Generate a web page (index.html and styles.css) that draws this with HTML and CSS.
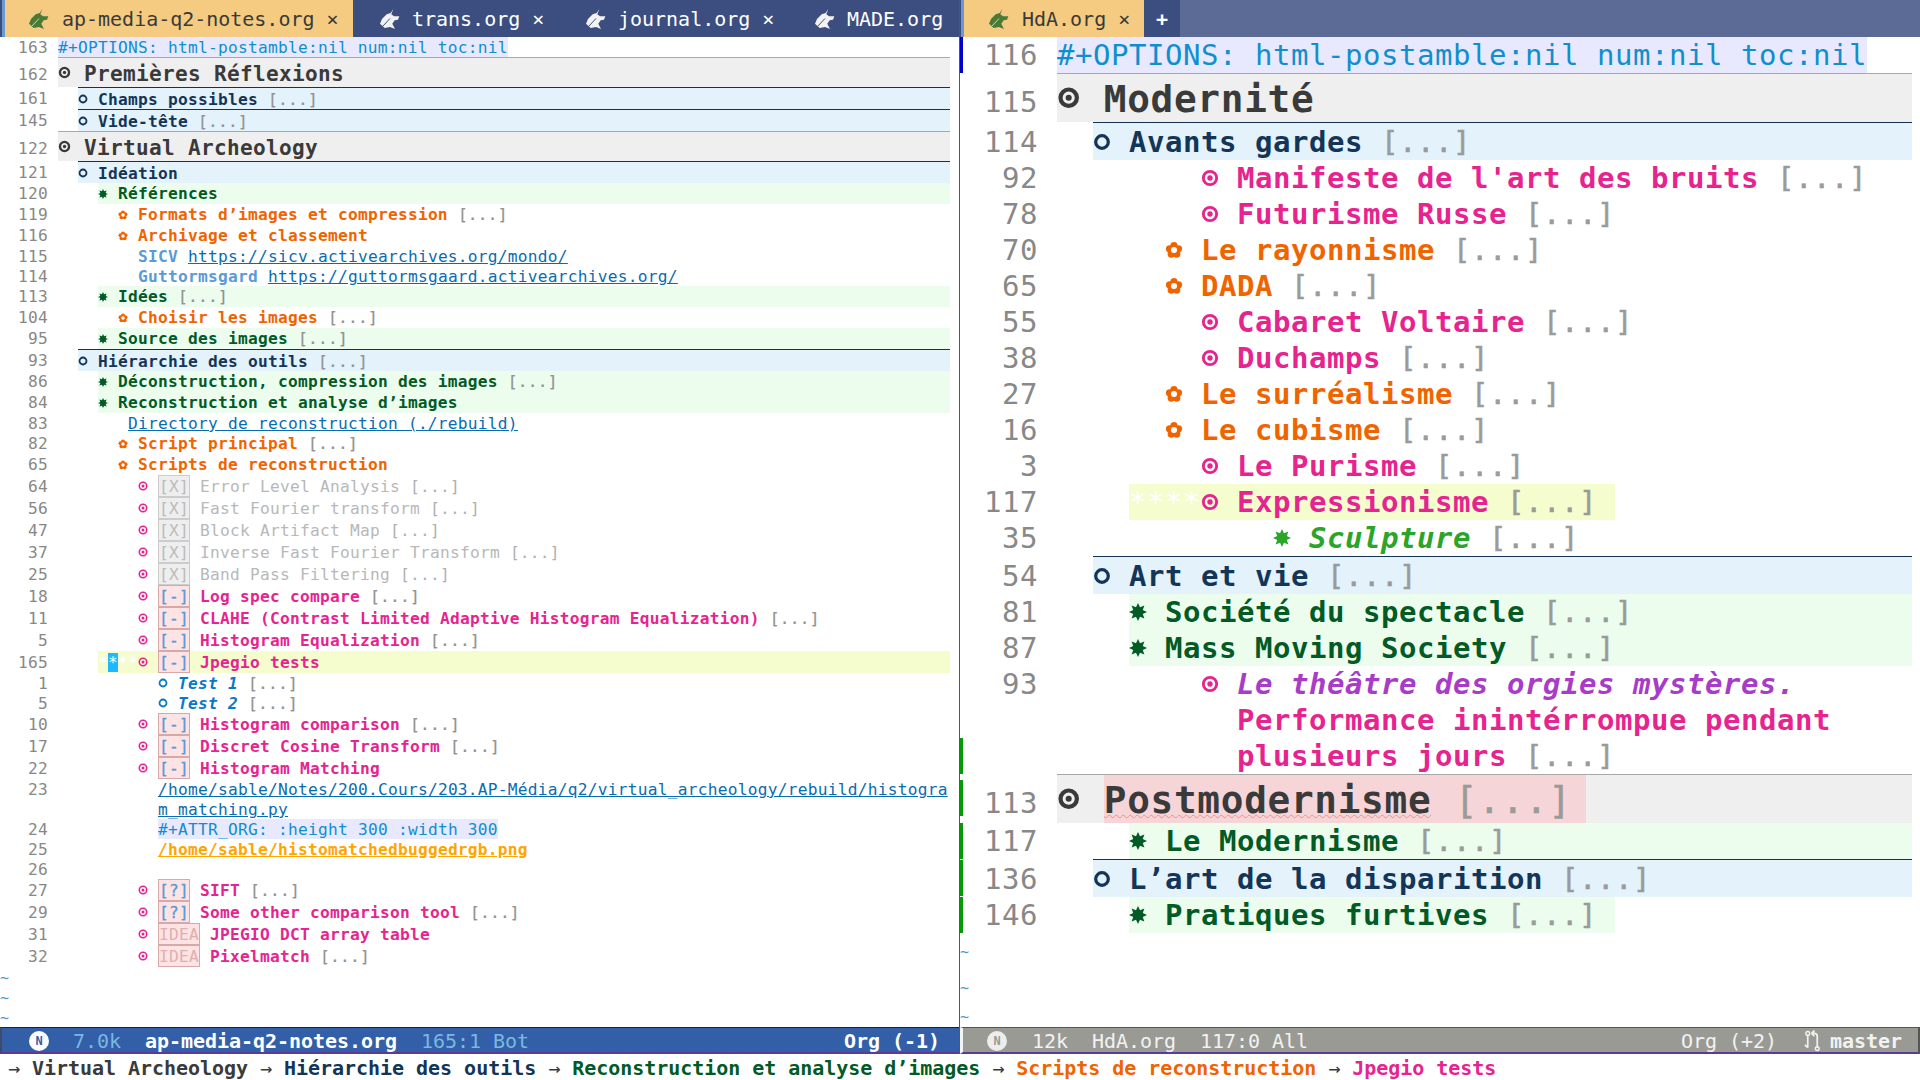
FILE: index.html
```html
<!DOCTYPE html>
<html lang="fr">
<head>
<meta charset="utf-8">
<title>Emacs</title>
<link rel="stylesheet" href="styles.css">
</head>
<body>
<svg class="defs" width="0" height="0">
  <symbol id="uni" viewBox="0 0 20 20"><path class="uni-body" d="M13.3 0L11.3 5.3L14 7.3H19.3L18 10.7L14.7 11.3L12.3 14.7L15 20L10 18L4.7 19L0 14.7L2 10L6.7 5.3L10.7 4Z"/><path class="uni-slash" d="M2.5 17.5L10 9.5"/></symbol>
  <symbol id="r1" viewBox="0 0 20 20"><circle cx="10" cy="10" r="7" fill="none" stroke="currentColor" stroke-width="3.6"/><circle cx="10" cy="10" r="2.6" fill="currentColor"/></symbol>
  <symbol id="r2" viewBox="0 0 20 20"><circle cx="10" cy="10" r="7" fill="none" stroke="currentColor" stroke-width="3.6"/></symbol>
  <symbol id="r5" viewBox="0 0 20 20"><circle cx="10" cy="10" r="7.4" fill="none" stroke="currentColor" stroke-width="3.2"/><circle cx="10" cy="10" r="3" fill="currentColor"/></symbol>
  <symbol id="s" viewBox="0 0 20 20"><path fill="currentColor" d="M10 0L12.2 4.7L17.1 2.9L15.3 7.8L20 10L15.3 12.2L17.1 17.1L12.2 15.3L10 20L7.8 15.3L2.9 17.1L4.7 12.2L0 10L4.7 7.8L2.9 2.9L7.8 4.7Z"/></symbol>
  <symbol id="f" viewBox="0 0 20 20"><g fill="currentColor"><circle cx="10" cy="5" r="4"/><circle cx="15" cy="8.6" r="4"/><circle cx="13.1" cy="14.5" r="4"/><circle cx="6.9" cy="14.5" r="4"/><circle cx="5" cy="8.6" r="4"/></g><circle cx="10" cy="10" r="3.4" fill="#fff"/></symbol>
</svg>
<div class="windows">
  <section class="win left">
    <header class="tabs">
      <div class="stripe"></div>
      <div class="tab active t1"><svg class="ico"><use href="#uni"/></svg><span class="tn">ap-media-q2-notes.org</span><span class="x">×</span></div>
      <div class="tab t2"><svg class="ico"><use href="#uni"/></svg><span class="tn">trans.org</span><span class="x">×</span></div>
      <div class="tab t3"><svg class="ico"><use href="#uni"/></svg><span class="tn">journal.org</span><span class="x">×</span></div>
      <div class="tab t4"><svg class="ico"><use href="#uni"/></svg><span class="tn">MADE.org</span></div>
    </header>
    <div class="buf">
      <div class="row h20"><span class="ln">163</span><div class="c"><span class="kw">#+OPTIONS: html-postamble:nil num:nil toc:nil</span></div></div>
      <div class="row h30 l1"><span class="ln">162</span><div class="c"><span class="b"><svg class="bi"><use href="#r1"/></svg></span><span class="tx">Premières Réflexions</span></div></div>
      <div class="row h22 l2"><span class="ln">161</span><div class="c"><span class="b"><svg class="bi"><use href="#r2"/></svg></span><span class="tx">Champs possibles <i class="e">[...]</i></span></div></div>
      <div class="row h22 l2"><span class="ln">145</span><div class="c"><span class="b"><svg class="bi"><use href="#r2"/></svg></span><span class="tx">Vide-tête <i class="e">[...]</i></span></div></div>
      <div class="row h30 l1"><span class="ln">122</span><div class="c"><span class="b"><svg class="bi"><use href="#r1"/></svg></span><span class="tx">Virtual Archeology</span></div></div>
      <div class="row h22 l2"><span class="ln">121</span><div class="c"><span class="b"><svg class="bi"><use href="#r2"/></svg></span><span class="tx">Idéation</span></div></div>
      <div class="row h21 l3"><span class="ln">120</span><div class="c"><span class="b"><svg class="bi"><use href="#s"/></svg></span><span class="tx">Références</span></div></div>
      <div class="row h21 l4"><span class="ln">119</span><div class="c"><span class="b"><svg class="bi"><use href="#f"/></svg></span><span class="tx">Formats d’images et compression <i class="e">[...]</i></span></div></div>
      <div class="row h21 l4"><span class="ln">116</span><div class="c"><span class="b"><svg class="bi"><use href="#f"/></svg></span><span class="tx">Archivage et classement</span></div></div>
      <div class="row h20 p6"><span class="ln">115</span><div class="c"><span class="tx"><span class="nm">SICV</span> <a class="lk">https://sicv.activearchives.org/mondo/</a></span></div></div>
      <div class="row h20 p6"><span class="ln">114</span><div class="c"><span class="tx"><span class="nm">Guttormsgard</span> <a class="lk">https://guttormsgaard.activearchives.org/</a></span></div></div>
      <div class="row h21 l3"><span class="ln">113</span><div class="c"><span class="b"><svg class="bi"><use href="#s"/></svg></span><span class="tx">Idées <i class="e">[...]</i></span></div></div>
      <div class="row h21 l4"><span class="ln">104</span><div class="c"><span class="b"><svg class="bi"><use href="#f"/></svg></span><span class="tx">Choisir les images <i class="e">[...]</i></span></div></div>
      <div class="row h21 l3"><span class="ln">95</span><div class="c"><span class="b"><svg class="bi"><use href="#s"/></svg></span><span class="tx">Source des images <i class="e">[...]</i></span></div></div>
      <div class="row h22 l2"><span class="ln">93</span><div class="c"><span class="b"><svg class="bi"><use href="#r2"/></svg></span><span class="tx">Hiérarchie des outils <i class="e">[...]</i></span></div></div>
      <div class="row h21 l3"><span class="ln">86</span><div class="c"><span class="b"><svg class="bi"><use href="#s"/></svg></span><span class="tx">Déconstruction, compression des images <i class="e">[...]</i></span></div></div>
      <div class="row h21 l3"><span class="ln">84</span><div class="c"><span class="b"><svg class="bi"><use href="#s"/></svg></span><span class="tx">Reconstruction et analyse d’images</span></div></div>
      <div class="row h20 p5"><span class="ln">83</span><div class="c"><a class="lk">Directory de reconstruction (./rebuild)</a></div></div>
      <div class="row h21 l4"><span class="ln">82</span><div class="c"><span class="b"><svg class="bi"><use href="#f"/></svg></span><span class="tx">Script principal <i class="e">[...]</i></span></div></div>
      <div class="row h21 l4"><span class="ln">65</span><div class="c"><span class="b"><svg class="bi"><use href="#f"/></svg></span><span class="tx">Scripts de reconstruction</span></div></div>
      <div class="row h22 l5"><span class="ln">64</span><div class="c"><span class="b"><svg class="bi"><use href="#r5"/></svg></span><span class="cb done">[X]</span><span class="tx gone">Error Level Analysis <i class="e">[...]</i></span></div></div>
      <div class="row h22 l5"><span class="ln">56</span><div class="c"><span class="b"><svg class="bi"><use href="#r5"/></svg></span><span class="cb done">[X]</span><span class="tx gone">Fast Fourier transform <i class="e">[...]</i></span></div></div>
      <div class="row h22 l5"><span class="ln">47</span><div class="c"><span class="b"><svg class="bi"><use href="#r5"/></svg></span><span class="cb done">[X]</span><span class="tx gone">Block Artifact Map <i class="e">[...]</i></span></div></div>
      <div class="row h22 l5"><span class="ln">37</span><div class="c"><span class="b"><svg class="bi"><use href="#r5"/></svg></span><span class="cb done">[X]</span><span class="tx gone">Inverse Fast Fourier Transform <i class="e">[...]</i></span></div></div>
      <div class="row h22 l5"><span class="ln">25</span><div class="c"><span class="b"><svg class="bi"><use href="#r5"/></svg></span><span class="cb done">[X]</span><span class="tx gone">Band Pass Filtering <i class="e">[...]</i></span></div></div>
      <div class="row h22 l5"><span class="ln">18</span><div class="c"><span class="b"><svg class="bi"><use href="#r5"/></svg></span><span class="cb">[-]</span><span class="tx">Log spec compare <i class="e">[...]</i></span></div></div>
      <div class="row h22 l5"><span class="ln">11</span><div class="c"><span class="b"><svg class="bi"><use href="#r5"/></svg></span><span class="cb">[-]</span><span class="tx">CLAHE (Contrast Limited Adaptive Histogram Equalization) <i class="e">[...]</i></span></div></div>
      <div class="row h22 l5"><span class="ln">5</span><div class="c"><span class="b"><svg class="bi"><use href="#r5"/></svg></span><span class="cb">[-]</span><span class="tx">Histogram Equalization <i class="e">[...]</i></span></div></div>
      <div class="row h22 l5 cur"><span class="ln">165</span><div class="c"><span class="st">*<em class="pt">*</em>**</span><span class="b"><svg class="bi"><use href="#r5"/></svg></span><span class="cb">[-]</span><span class="tx">Jpegio tests</span></div></div>
      <div class="row h20 l6"><span class="ln">1</span><div class="c"><span class="b"><svg class="bi"><use href="#r2"/></svg></span><span class="tx">Test 1 <i class="e">[...]</i></span></div></div>
      <div class="row h20 l6"><span class="ln">5</span><div class="c"><span class="b"><svg class="bi"><use href="#r2"/></svg></span><span class="tx">Test 2 <i class="e">[...]</i></span></div></div>
      <div class="row h22 l5"><span class="ln">10</span><div class="c"><span class="b"><svg class="bi"><use href="#r5"/></svg></span><span class="cb">[-]</span><span class="tx">Histogram comparison <i class="e">[...]</i></span></div></div>
      <div class="row h22 l5"><span class="ln">17</span><div class="c"><span class="b"><svg class="bi"><use href="#r5"/></svg></span><span class="cb">[-]</span><span class="tx">Discret Cosine Transform <i class="e">[...]</i></span></div></div>
      <div class="row h22 l5"><span class="ln">22</span><div class="c"><span class="b"><svg class="bi"><use href="#r5"/></svg></span><span class="cb">[-]</span><span class="tx">Histogram Matching</span></div></div>
      <div class="row h20 p10"><span class="ln">23</span><div class="c"><a class="lk">/home/sable/Notes/200.Cours/203.AP-Média/q2/virtual_archeology/rebuild/histogra</a></div></div>
      <div class="row h20 p10"><span class="ln"></span><div class="c"><a class="lk">m_matching.py</a></div></div>
      <div class="row h20 p10"><span class="ln">24</span><div class="c"><span class="kw">#+ATTR_ORG: :height 300 :width 300</span></div></div>
      <div class="row h20 p10"><span class="ln">25</span><div class="c"><a class="lk img">/home/sable/histomatchedbuggedrgb.png</a></div></div>
      <div class="row h20 p10"><span class="ln">26</span><div class="c"></div></div>
      <div class="row h22 l5"><span class="ln">27</span><div class="c"><span class="b"><svg class="bi"><use href="#r5"/></svg></span><span class="cb">[?]</span><span class="tx">SIFT <i class="e">[...]</i></span></div></div>
      <div class="row h22 l5"><span class="ln">29</span><div class="c"><span class="b"><svg class="bi"><use href="#r5"/></svg></span><span class="cb">[?]</span><span class="tx">Some other comparison tool <i class="e">[...]</i></span></div></div>
      <div class="row h22 l5"><span class="ln">31</span><div class="c"><span class="b"><svg class="bi"><use href="#r5"/></svg></span><span class="cb idea">IDEA</span><span class="tx">JPEGIO DCT array table</span></div></div>
      <div class="row h22 l5"><span class="ln">32</span><div class="c"><span class="b"><svg class="bi"><use href="#r5"/></svg></span><span class="cb idea">IDEA</span><span class="tx">Pixelmatch <i class="e">[...]</i></span></div></div>
      <div class="tilde h20">~</div>
      <div class="tilde h20">~</div>
      <div class="tilde h20">~</div>
    </div>
    <footer class="ml ml-on">
      <span class="badge">N</span>
      <span class="sz">7.0k</span>
      <span class="fn">ap-media-q2-notes.org</span>
      <span class="pos">165:1 Bot</span>
      <span class="mode">Org (-1)</span>
    </footer>
  </section>
  <section class="win right">
    <header class="tabs">
      <div class="stripe"></div>
      <div class="tab active t5"><svg class="ico"><use href="#uni"/></svg><span class="tn">HdA.org</span><span class="x">×</span></div>
      <div class="tab plus">+</div>
    </header>
    <div class="buf">
      <div class="row h36 fr-b"><span class="ln">116</span><div class="c"><span class="kw">#+OPTIONS: html-postamble:nil num:nil toc:nil</span></div></div>
      <div class="row h49 l1"><span class="ln">115</span><div class="c"><span class="b"><svg class="bi"><use href="#r1"/></svg></span><span class="tx">Modernité</span></div></div>
      <div class="row h38 l2"><span class="ln">114</span><div class="c"><span class="b"><svg class="bi"><use href="#r2"/></svg></span><span class="tx">Avants gardes <i class="e">[...]</i></span></div></div>
      <div class="row h36 l5"><span class="ln">92</span><div class="c"><span class="b"><svg class="bi"><use href="#r5"/></svg></span><span class="tx">Manifeste de l'art des bruits <i class="e">[...]</i></span></div></div>
      <div class="row h36 l5"><span class="ln">78</span><div class="c"><span class="b"><svg class="bi"><use href="#r5"/></svg></span><span class="tx">Futurisme Russe <i class="e">[...]</i></span></div></div>
      <div class="row h36 l4"><span class="ln">70</span><div class="c"><span class="b"><svg class="bi"><use href="#f"/></svg></span><span class="tx">Le rayonnisme <i class="e">[...]</i></span></div></div>
      <div class="row h36 l4"><span class="ln">65</span><div class="c"><span class="b"><svg class="bi"><use href="#f"/></svg></span><span class="tx">DADA <i class="e">[...]</i></span></div></div>
      <div class="row h36 l5"><span class="ln">55</span><div class="c"><span class="b"><svg class="bi"><use href="#r5"/></svg></span><span class="tx">Cabaret Voltaire <i class="e">[...]</i></span></div></div>
      <div class="row h36 l5"><span class="ln">38</span><div class="c"><span class="b"><svg class="bi"><use href="#r5"/></svg></span><span class="tx">Duchamps <i class="e">[...]</i></span></div></div>
      <div class="row h36 l4"><span class="ln">27</span><div class="c"><span class="b"><svg class="bi"><use href="#f"/></svg></span><span class="tx">Le surréalisme <i class="e">[...]</i></span></div></div>
      <div class="row h36 l4"><span class="ln">16</span><div class="c"><span class="b"><svg class="bi"><use href="#f"/></svg></span><span class="tx">Le cubisme <i class="e">[...]</i></span></div></div>
      <div class="row h36 l5"><span class="ln">3</span><div class="c"><span class="b"><svg class="bi"><use href="#r5"/></svg></span><span class="tx">Le Purisme <i class="e">[...]</i></span></div></div>
      <div class="row h36 l5 cur short"><span class="ln">117</span><div class="c"><span class="st">****</span><span class="b"><svg class="bi"><use href="#r5"/></svg></span><span class="tx">Expressionisme <i class="e">[...]</i></span></div></div>
      <div class="row h36 l6g"><span class="ln">35</span><div class="c"><span class="b"><svg class="bi"><use href="#s"/></svg></span><span class="tx">Sculpture <i class="e">[...]</i></span></div></div>
      <div class="row h38 l2"><span class="ln">54</span><div class="c"><span class="b"><svg class="bi"><use href="#r2"/></svg></span><span class="tx">Art et vie <i class="e">[...]</i></span></div></div>
      <div class="row h36 l3"><span class="ln">81</span><div class="c"><span class="b"><svg class="bi"><use href="#s"/></svg></span><span class="tx">Société du spectacle <i class="e">[...]</i></span></div></div>
      <div class="row h36 l3"><span class="ln">87</span><div class="c"><span class="b"><svg class="bi"><use href="#s"/></svg></span><span class="tx">Mass Moving Society <i class="e">[...]</i></span></div></div>
      <div class="row h36 l5"><span class="ln">93</span><div class="c"><span class="b"><svg class="bi"><use href="#r5"/></svg></span><span class="tx purple">Le théâtre des orgies mystères.</span></div></div>
      <div class="row h36 l5"><span class="ln"></span><div class="c"><span class="b"></span><span class="tx">Performance inintérrompue pendant</span></div></div>
      <div class="row h36 l5 fr-g"><span class="ln"></span><div class="c"><span class="b"></span><span class="tx">plusieurs jours <i class="e">[...]</i></span></div></div>
      <div class="row h49 l1 pm fr-g2"><span class="ln">113</span><div class="c"><span class="b"><svg class="bi"><use href="#r1"/></svg></span><span class="tx"><span class="err">Postmodernisme</span> <i class="e">[...]</i></span></div></div>
      <div class="row h36 l3 fr-g"><span class="ln">117</span><div class="c"><span class="b"><svg class="bi"><use href="#s"/></svg></span><span class="tx">Le Modernisme <i class="e">[...]</i></span></div></div>
      <div class="row h38 l2 fr-g3"><span class="ln">136</span><div class="c"><span class="b"><svg class="bi"><use href="#r2"/></svg></span><span class="tx">L’art de la disparition <i class="e">[...]</i></span></div></div>
      <div class="row h36 l3 short fr-g"><span class="ln">146</span><div class="c"><span class="b"><svg class="bi"><use href="#s"/></svg></span><span class="tx">Pratiques furtives <i class="e">[...]</i></span></div></div>
      <div class="tilde h36">~</div>
      <div class="tilde h36">~</div>
      <div class="tilde h22">~</div>
    </div>
    <footer class="ml ml-off">
      <span class="badge">N</span>
      <span class="sz">12k</span>
      <span class="fn">HdA.org</span>
      <span class="pos">117:0 All</span>
      <span class="mode">Org (+2)</span>
      <svg class="git" viewBox="0 0 20 22"><path d="M5 5v13M5 18l-3-3M15 18V6c0-2-1-3-3-3H9M9 3l3-3M9 3l3 3" fill="none" stroke="currentColor" stroke-width="1.8"/><circle cx="5" cy="3" r="2" fill="none" stroke="currentColor" stroke-width="1.5"/><circle cx="15" cy="19" r="2" fill="none" stroke="currentColor" stroke-width="1.5"/></svg>
      <span class="br">master</span>
    </footer>
  </section>
</div>
<div class="mini"><span class="ar">→</span> <span class="m1">Virtual Archeology</span> <span class="ar">→</span> <span class="m2">Hiérarchie des outils</span> <span class="ar">→</span> <span class="m3">Reconstruction et analyse d’images</span> <span class="ar">→</span> <span class="m4">Scripts de reconstruction</span> <span class="ar">→</span> <span class="m5">Jpegio tests</span></div>
</body>
</html>
```
FILE: styles.css
```css
* { box-sizing: border-box; }
html, body { margin: 0; padding: 0; }
body {
  width: 1920px;
  height: 1080px;
  overflow: hidden;
  background: #fff;
  color: #3a3a3a;
  font-family: "DejaVu Sans Mono", "Liberation Mono", monospace;
}
.defs { position: absolute; }
.windows { display: flex; height: 1054px; }
.win { display: flex; flex-direction: column; height: 1054px; }
.left { width: 960px; border-right: 1px solid #6a3fa5; --c: 10px; --fs: 16.2px; --ls: .25px; --gut: 48px; --gap: 10px; }
.right { width: 960px; --c: 18px; --fs: 29px; --ls: .54px; --gut: 78px; --gap: 19px; }

/* tabs */
.tabs { display: flex; height: 37px; flex: none; background: #5c6a96; overflow: hidden; font-size: 20px; letter-spacing: -.02px; }
.left .tabs { background: #3c4e7f; }
.stripe { flex: none; }
.left .stripe { width: 5px; background: linear-gradient(90deg, #3c4e7f 2px, #6a9ad0 2px); }
.right .stripe { width: 4px; background: linear-gradient(90deg, #3c4e7f 1px, #6a9ad0 1px); }
.tab { display: flex; align-items: center; flex: none; color: #fff; background: #3c4e7f; white-space: nowrap; height: 37px; }
.tab.active { background: #f4cb80; color: #3a3a3a; }
.t1 { width: 348px; padding-left: 24px; }
.t2 { width: 206px; padding-left: 27px; }
.t3 { width: 229px; padding-left: 27px; }
.t4 { width: 171px; padding-left: 27px; }
.t5 { width: 180px; padding-left: 25px; }
.ico { width: 20px; height: 20px; flex: none; margin-right: 12px; color: #f2f2f2; --slash: #3c4e7f; }
.active .ico { margin-right: 13px; color: #4a7a38; --slash: #f4cb80; }
.uni-body { fill: currentColor; }
.uni-slash { fill: none; stroke: var(--slash); stroke-width: 1; }
.x { margin-left: 12px; }
.plus { width: 36px; justify-content: center; font-weight: bold; font-size: 20px; }

/* buffer */
.buf { flex: 1; min-height: 0; overflow: hidden; position: relative; }
.row { display: flex; font-size: var(--fs); letter-spacing: var(--ls); white-space: pre; }
.h20 { height: 20px; line-height: 22px; }
.h21 { height: 21px; line-height: 22px; }
.h22 { height: 22px; line-height: 24px; }
.h30 { height: 30px; line-height: 32px; }
.h36 { height: 36px; line-height: 36px; }
.h38 { height: 38px; line-height: 38px; }
.h49 { height: 49px; line-height: 51px; }
.ln { width: var(--gut); margin-right: var(--gap); flex: none; text-align: right; color: #888; font-weight: normal; }
.c { flex: 1; min-width: 0; margin-right: 9px; display: flex; align-items: stretch; overflow: hidden; }
.right .c { margin-right: 8px; }
.b { width: calc(var(--c) * 2); flex: none; display: flex; align-items: center; }
.bi { width: var(--c); height: var(--c); flex: none; }
.e { font-weight: normal; font-style: normal; color: #929292; -webkit-text-stroke: .2px #929292; }
.right .e { color: #9a9a9a; -webkit-text-stroke: .5px #9a9a9a; }
.kw { color: #0f8fcf; background: #e8e8ff; }

.l1 .c { background: #efefef; border-top: 1px solid #a8a8a8; color: #3a3a3a; font-weight: bold; font-size: calc(var(--fs) * 1.3); letter-spacing: calc(var(--ls) * 1.3); }
.l1 .b { width: calc(var(--c) * 2.6); }
.l1 .bi { width: calc(var(--c) * 1.3); height: calc(var(--c) * 1.3); }
.l1 .ln { padding-top: 2px; }
.right .l1 .ln { padding-top: 4px; }
.l2 .c { margin-left: calc(var(--c) * 2); background: #e3f2fb; border-top: 1px solid #15324f; color: #123558; font-weight: bold; }
.right .l2 .ln { padding-top: 1px; }
.l3 .c { margin-left: calc(var(--c) * 4); background: #ecfdee; color: #025a25; font-weight: bold; }
.l4 .c { margin-left: calc(var(--c) * 6); color: #f06400; font-weight: bold; }
.l5 .c { margin-left: calc(var(--c) * 8); color: #e6248f; font-weight: bold; }
.l6 .c { margin-left: calc(var(--c) * 10); color: #0a78c8; font-weight: bold; font-style: italic; }
.l6g .c { margin-left: calc(var(--c) * 12); color: #2aa52a; font-weight: bold; font-style: italic; }
.p5 .c { margin-left: calc(var(--c) * 7); }
.p6 .c { margin-left: calc(var(--c) * 8); }
.p10 .c { margin-left: calc(var(--c) * 10); }
.nm { color: #5a9ad6; font-weight: bold; }
.lk { color: #0a6cb0; text-decoration: underline; }
.lk.img { color: #ffa500; font-weight: bold; }
.purple { color: #a83cc8; font-style: italic; }

/* checkboxes */
.cb { width: 32px; height: 22px; line-height: 22px; flex: none; border: 1px solid #d8a8a8; background: #fde3e3; color: #5a9ad6; font-weight: normal; -webkit-text-stroke: .3px #5a9ad6; margin-right: 10px; }
.cb.done { border-color: #ccc; background: #eee; color: #bbb; -webkit-text-stroke: 0; }
.cb.idea { width: 42px; color: #e0b0b0; -webkit-text-stroke: 0; }
.gone { color: #b8b8b8; font-weight: normal; }
.gone .e { color: #b0b0b0; -webkit-text-stroke: 0; }

/* highlighted line */
.cur .c { margin-left: calc(var(--c) * 4); background: #f5fdcf; }
.st { width: calc(var(--c) * 4); flex: none; color: #fff; font-weight: normal; }
.pt { font-style: normal; background: #1eb8ff; }

/* right pane specifics */
.pm .tx { background: #f5d5d8; padding-right: 14px; height: 48px; }
.err { text-decoration: underline wavy #f88; text-decoration-thickness: 1px; }
.short .c { flex: none; width: 486px; }
.right .row { position: relative; }
.right .row::before { content: ""; position: absolute; left: 0; width: 3px; top: 0; bottom: 0; }
.fr-b::before { background: #0000d0; }
.fr-g::before { background: #079a07; }
.fr-g2::before { background: #079a07; top: 6px !important; bottom: 7px !important; }
.fr-g3::before { background: #079a07; top: 1px !important; bottom: 1px !important; }
.tilde { color: #4a9ad4; font-size: 15px; }
.h36.tilde { line-height: 38px; }

/* mode lines */
.ml { height: 27px; flex: none; display: flex; align-items: center; padding-top: 1px; font-size: 20px; letter-spacing: -.04px; white-space: nowrap; border-top: 1px solid #222; border-bottom: 2px solid #5c3a9a; }
.ml-on { background: #335fa8; color: #fff; border-left: 2px solid #3f4a6a; }
.ml-off { background: #9a9a94; color: #f2f2f2; border-left: 3px solid #f5f5f5; border-top-color: #555; border-right: 2px solid #555; }
.badge { width: 20px; height: 20px; border-radius: 50%; flex: none; background: #fff; color: #335fa8; font-size: 12px; line-height: 20px; text-align: center; font-weight: bold; margin-left: 27px; }
.ml-off .badge { background: #ededed; color: #9a9a94; margin-left: 24px; }
.sz { margin-left: 24px; color: #7ab8e0; }
.ml-off .sz { margin-left: 25px; color: #f2f2f2; }
.fn { margin-left: 24px; font-weight: bold; }
.ml-off .fn { font-weight: normal; }
.pos { margin-left: 24px; color: #7ab8e0; }
.ml-off .pos { margin-left: 24px; color: #f2f2f2; }
.mode { margin-left: auto; margin-right: 19px; font-weight: bold; }
.ml-off .mode { font-weight: normal; margin-right: 26px; }
.git { width: 19px; height: 22px; flex: none; margin-right: 8px; }
.br { margin-right: 16px; font-weight: bold; }

/* minibuffer */
.mini { height: 26px; line-height: 28px; padding-left: 8px; font-size: 20px; letter-spacing: -.04px; font-weight: bold; white-space: pre; }
.ar { font-weight: normal; color: #3a3a3a; }
.m1 { color: #3a3a3a; }
.m2 { color: #123558; }
.m3 { color: #025a25; }
.m4 { color: #f06400; }
.m5 { color: #e6248f; }
```
